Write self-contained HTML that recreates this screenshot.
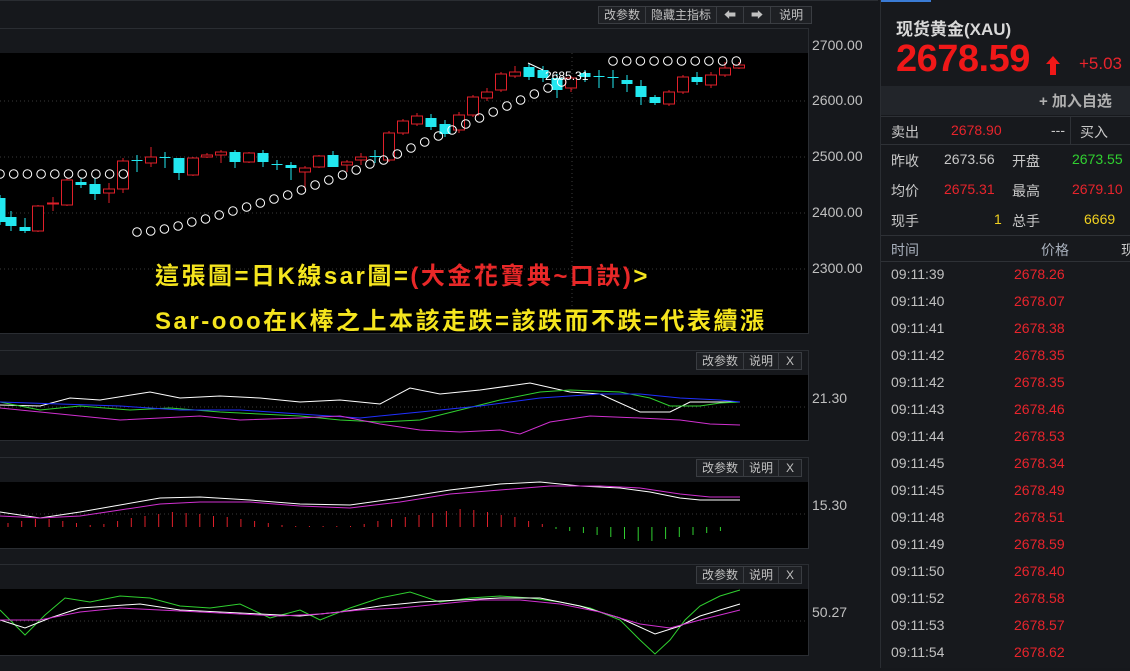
<!DOCTYPE html>
<html><head><meta charset="utf-8">
<style>
*{margin:0;padding:0;box-sizing:border-box}
body{width:1130px;height:668px;background:#16181c;overflow:hidden;position:relative;font-family:"Liberation Sans","Noto Sans CJK SC",sans-serif;color:#c8c8c8}
.abs{position:absolute}
.btns{position:absolute;display:flex;border:1px solid #3a3d42;height:18px;font-size:12px;color:#c0c0c0}
.btns span{padding:0 5px;line-height:16px;border-right:1px solid #3a3d42;background:#1e2024}
.btns span:last-child{border-right:none}
.ax{position:absolute;left:812px;font-size:14px;color:#c0c0c0}
.blk{position:absolute;left:0;width:808px;background:#000}
.rp{position:absolute;left:880px;top:0;width:250px;height:668px;background:#17191d;border-left:1px solid #2a2d32}
.row{position:absolute;left:10px;font-size:14px}
.lst{position:absolute;left:0;width:250px;height:27px;font-size:14px}
.lst .t{position:absolute;left:10px;top:0;color:#c0c0c0}
.lst .p{position:absolute;left:133px;top:0;color:#e8242c}
.ov{position:absolute;left:155px;font-size:24px;font-weight:bold;letter-spacing:2.5px;color:#f5e51e;white-space:nowrap;font-family:'Liberation Sans','Noto Sans CJK TC',sans-serif}
</style></head><body>
<div class="abs" style="left:0;top:0;width:878px;height:1px;background:#2a2d32"></div>
<div class="btns" style="left:598px;top:6px"><span>改参数</span><span>隐藏主指标</span><span style="padding:0 7px">&#x2B05;</span><span style="padding:0 7px">&#x27A1;</span><span style="padding:0 8px">说明</span></div>
<div class="abs" style="left:0;top:28px;width:809px;height:306px;border:1px solid #2a2d32;border-left:none"></div>
<div class="blk" style="top:53px;height:280px"></div>
<div class="ax" style="top:37px">2700.00</div>
<div class="ax" style="top:92px">2600.00</div>
<div class="ax" style="top:148px">2500.00</div>
<div class="ax" style="top:204px">2400.00</div>
<div class="ax" style="top:260px">2300.00</div>

<div class="btns" style="left:696px;top:352px"><span>改参数</span><span>说明</span><span style="padding:0 7px">X</span></div>
<div class="abs" style="left:0;top:350px;width:809px;height:91px;border:1px solid #2a2d32;border-left:none"></div>
<div class="blk" style="top:375px;height:65px"></div>
<div class="ax" style="top:390px">21.30</div>

<div class="btns" style="left:696px;top:459px"><span>改参数</span><span>说明</span><span style="padding:0 7px">X</span></div>
<div class="abs" style="left:0;top:457px;width:809px;height:92px;border:1px solid #2a2d32;border-left:none"></div>
<div class="blk" style="top:482px;height:66px"></div>
<div class="ax" style="top:497px">15.30</div>

<div class="btns" style="left:696px;top:566px"><span>改参数</span><span>说明</span><span style="padding:0 7px">X</span></div>
<div class="abs" style="left:0;top:564px;width:809px;height:92px;border:1px solid #2a2d32;border-left:none"></div>
<div class="blk" style="top:589px;height:66px"></div>
<div class="ax" style="top:604px">50.27</div>

<svg class="abs" style="left:0;top:0" width="808" height="668" id="sv">
<g stroke="#3a3a3a" stroke-dasharray="1,3" stroke-width="1">
<line x1="0" y1="101" x2="808" y2="101"/><line x1="0" y1="157" x2="808" y2="157"/><line x1="0" y1="213" x2="808" y2="213"/><line x1="0" y1="269" x2="808" y2="269"/>
<line x1="572" y1="53" x2="572" y2="333"/>
<line x1="0" y1="407" x2="808" y2="407"/><line x1="0" y1="514" x2="808" y2="514"/><line x1="0" y1="621" x2="808" y2="621"/>
</g>
<g id="c"></g>
<text x="545" y="80" fill="#fff" font-size="12" font-family="Liberation Sans">2685.31</text>
<polyline points="528,63 543,70" stroke="#fff" fill="none"/>
<polyline fill="none" stroke="#fff" points="0,405 40,406 70,398 100,400 150,392 180,398 220,396 260,398 300,402 340,400 380,404 410,388 440,394 480,390 530,383 570,392 600,394 640,412 670,412 690,402 720,402 740,402"/>
<polyline fill="none" stroke="#30d030" points="0,402 40,410 80,406 130,410 170,408 220,412 260,414 300,416 340,420 380,422 420,420 460,410 500,400 540,392 570,390 620,392 650,398 670,406 700,406 720,403 740,402"/>
<polyline fill="none" stroke="#2030ff" points="0,402 60,404 120,406 180,410 240,410 300,414 360,418 420,412 480,406 540,398 600,394 640,394 680,398 720,400 740,402"/>
<polyline fill="none" stroke="#d030d0" points="0,408 40,412 80,416 120,420 160,418 200,416 240,420 300,418 340,416 380,424 420,430 460,432 500,430 520,434 550,422 590,416 640,418 680,420 710,424 740,425"/>
<polyline fill="none" stroke="#fff" points="0,512 40,518 80,512 120,505 160,498 200,497 250,500 300,504 350,505 400,498 450,490 500,484 540,482 580,486 620,488 650,492 680,498 700,500 740,500"/>
<polyline fill="none" stroke="#d030d0" points="0,516 40,518 80,516 120,510 160,504 200,502 250,502 300,506 350,508 400,502 450,494 500,490 550,486 600,486 640,488 680,494 710,497 740,497"/>
<g id="h"></g>
<polyline fill="none" stroke="#30d030" points="0,610 25,635 45,615 65,598 90,602 120,596 150,598 180,606 210,608 240,604 270,618 300,610 320,620 350,608 380,598 410,592 440,602 470,598 500,596 530,598 560,602 590,608 620,620 640,640 655,654 670,640 685,620 700,606 720,596 740,590"/>
<polyline fill="none" stroke="#fff" points="0,620 25,628 50,618 80,608 110,606 140,604 180,610 220,612 260,614 300,616 340,612 380,606 420,602 460,600 500,598 540,598 580,606 620,618 655,634 680,626 700,616 720,610 740,604"/>
<polyline fill="none" stroke="#d030d0" points="0,620 40,620 80,612 120,608 160,610 200,612 240,614 280,616 320,614 360,610 400,608 440,604 480,600 520,600 560,604 600,612 640,624 670,628 700,620 740,610"/>
</svg>
<div class="ov" style="top:256px">這張圖=日K線sar圖=<span style="color:#e82828">(大金花寶典~口訣)</span>&gt;</div>
<div class="ov" style="top:301px">Sar-ooo在K棒之上本該走跌=該跌而不跌=代表續漲</div>

<div class="rp">
<div class="abs" style="left:0;top:0;width:50px;height:2px;background:#3a7bd5"></div>
<div class="abs" style="left:15px;top:15px;font-size:17px;font-weight:bold;color:#d8d8d8">现货黄金(XAU)</div>
<div class="abs" style="left:15px;top:38px;font-size:38px;font-weight:bold;color:#f01818;letter-spacing:-0.5px">2678.59</div>
<svg class="abs" style="left:165px;top:56px" width="14" height="19"><polygon points="7,0 14,8 10,8 10,19 4,19 4,8 0,8" fill="#f01818"/></svg>
<div class="abs" style="left:198px;top:54px;font-size:17px;color:#e8242c">+5.03</div>
<div class="abs" style="left:0;top:86px;width:250px;height:29px;background:#22252a"></div>
<div class="abs" style="left:158px;top:90px;font-size:15px;color:#b0b0b0;font-weight:bold">+ 加入自选</div>
<div class="abs" style="left:0;top:116px;width:250px;height:1px;background:#2e3136"></div>
<div class="row" style="top:122px">卖出</div>
<div class="row" style="left:70px;top:122px;color:#e8242c">2678.90</div>
<div class="row" style="left:170px;top:122px">---</div>
<div class="abs" style="left:189px;top:116px;width:1px;height:28px;background:#2e3136"></div>
<div class="row" style="left:199px;top:122px">买入</div>
<div class="abs" style="left:0;top:144px;width:250px;height:1px;background:#2e3136"></div>
<div class="row" style="top:151px">昨收</div><div class="row" style="left:63px;top:151px">2673.56</div><div class="row" style="left:131px;top:151px">开盘</div><div class="row" style="left:191px;top:151px;color:#30d030">2673.55</div>
<div class="row" style="top:181px">均价</div><div class="row" style="left:63px;top:181px;color:#e8242c">2675.31</div><div class="row" style="left:131px;top:181px">最高</div><div class="row" style="left:191px;top:181px;color:#e8242c">2679.10</div>
<div class="row" style="top:211px">现手</div><div class="row" style="left:113px;top:211px;color:#f0d020">1</div><div class="row" style="left:131px;top:211px">总手</div><div class="row" style="left:203px;top:211px;color:#f0d020">6669</div>
<div class="abs" style="left:0;top:235px;width:250px;height:1px;background:#2e3136"></div>
<div class="row" style="top:240px;color:#a8b0bc">时间</div><div class="row" style="left:160px;top:240px;color:#a8b0bc">价格</div><div class="row" style="left:240px;top:240px">现</div>
<div class="abs" style="left:0;top:261px;width:250px;height:1px;background:#2e3136"></div>
<div id="lst"></div>
</div>
<script>
var c=[[0,198,222,'c',195,225],[11,217,226,'c',211,231],[25,227,231,'c',218,233],[38,231,206,'r',205,232],[53,204,203,'r',197,211],[67,205,180,'r',178,206],[81,182,185,'c',178,188],[95,184,194,'c',178,200],[109,193,189,'r',183,203],[123,189,161,'r',158,193],[137,160,161,'c',155,172],[151,163,157,'r',147,167],[165,157,158,'c',152,168],[179,158,173,'c',158,180],[193,175,158,'r',157,176],[207,157,155,'r',153,158],[221,155,152,'r',150,163],[235,152,162,'c',150,168],[249,162,153,'r',152,163],[263,153,162,'c',150,167],[277,164,165,'c',160,170],[291,165,168,'c',162,180],[305,172,168,'r',166,190],[319,167,156,'r',155,168],[333,155,167,'c',151,167],[347,165,162,'r',160,172],[361,160,157,'r',153,165],[375,156,157,'c',150,163],[389,160,133,'r',131,162],[403,133,121,'r',119,135],[417,124,116,'r',113,126],[431,118,127,'c',114,130],[445,124,134,'c',120,137],[459,130,115,'r',112,133],[473,115,97,'r',95,117],[487,98,92,'r',88,101],[501,90,74,'r',72,92],[515,76,72,'r',66,78],[529,67,77,'c',64,80],[543,70,78,'c',66,82],[557,78,90,'c',74,98],[571,88,78,'r',76,92],[585,73,77,'c',70,82],[599,76,77,'c',70,88],[613,77,78,'c',70,88],[627,80,84,'c',75,92],[641,86,97,'c',80,105],[655,97,103,'c',95,105],[669,104,92,'r',90,106],[683,92,77,'r',75,94],[697,77,82,'c',72,85],[711,85,75,'r',72,88],[725,75,68,'r',62,77],[739,68,65,'r',62,69]];
var s='';
c.forEach(function(d){var x=d[0],o=d[1],cl=d[2],col=d[3]=='r'?'#e0202a':'#22e8f0';var t=Math.min(o,cl),b=Math.max(o,cl),h=Math.max(b-t,1);
s+='<line x1="'+x+'" y1="'+d[4]+'" x2="'+x+'" y2="'+d[5]+'" stroke="'+col+'"/>';
if(d[3]=='r')s+='<rect x="'+(x-5.5)+'" y="'+t+'" width="11" height="'+h+'" fill="#000" stroke="'+col+'"/>';else s+='<rect x="'+(x-5.5)+'" y="'+t+'" width="11" height="'+h+'" fill="'+col+'"/>';});
for(var i=0;i<10;i++)s+='<circle cx="'+(i*13.7)+'" cy="174" r="4.3" fill="none" stroke="#fff"/>';
var sy=[232,231,229,226,222,219,215,211,207,203,199,195,190,185,180,175,170,164,160,154,148,142,136,130,124,118,112,106,100,94,88,82];
sy.forEach(function(y,i){s+='<circle cx="'+(137+i*13.7)+'" cy="'+y+'" r="4.3" fill="none" stroke="#fff"/>';});
for(var i=0;i<10;i++)s+='<circle cx="'+(613+i*13.7)+'" cy="61" r="4.3" fill="none" stroke="#fff"/>';
document.getElementById('c').innerHTML=s;
var h='',hv=[-4,-6,-8,-8,-6,-4,-2,-3,-6,-9,-11,-13,-15,-14,-13,-11,-10,-8,-6,-4,-2,-1,-1,-1,-1,-1,-3,-6,-8,-10,-12,-14,-16,-18,-17,-15,-12,-10,-6,-3,2,4,6,8,10,12,14,14,12,10,8,6,4];
hv.forEach(function(v,i){var x=8+i*13.7;var col=v<0?'#e0202a':'#30d030';h+='<line x1="'+x+'" y1="'+(527+(v<0?v:0))+'" x2="'+x+'" y2="'+(527+(v>0?v:0))+'" stroke="'+col+'"/>';});
document.getElementById('h').innerHTML=h;
var L=[['09:11:39','2678.26'],['09:11:40','2678.07'],['09:11:41','2678.38'],['09:11:42','2678.35'],['09:11:42','2678.35'],['09:11:43','2678.46'],['09:11:44','2678.53'],['09:11:45','2678.34'],['09:11:45','2678.49'],['09:11:48','2678.51'],['09:11:49','2678.59'],['09:11:50','2678.40'],['09:11:52','2678.58'],['09:11:53','2678.57'],['09:11:54','2678.62']];
var q='';L.forEach(function(r,i){q+='<div class="lst" style="top:'+(266+i*27)+'px"><span class="t">'+r[0]+'</span><span class="p">'+r[1]+'</span></div>';});
document.getElementById('lst').innerHTML=q;
</script>
</body></html>
